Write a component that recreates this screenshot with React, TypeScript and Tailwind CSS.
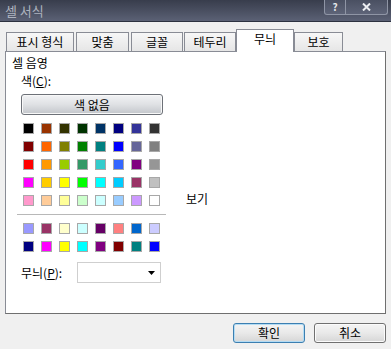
import React from "react";

// Excel "셀 서식" dialog, 무늬 tab — palette is the classic 56-colour one.
const STANDARD_ROWS = [
  ["#000000", "#993300", "#333300", "#003300", "#003366", "#000080", "#333399", "#333333"],
  ["#800000", "#ff6600", "#808000", "#008000", "#008080", "#0000ff", "#666699", "#808080"],
  ["#ff0000", "#ff9900", "#99cc00", "#339966", "#33cccc", "#3366ff", "#800080", "#969696"],
  ["#ff00ff", "#ffcc00", "#ffff00", "#00ff00", "#00ffff", "#00ccff", "#993366", "#c0c0c0"],
  ["#ff99cc", "#ffcc99", "#ffff99", "#ccffcc", "#ccffff", "#99ccff", "#cc99ff", "#ffffff"],
];

const CHART_ROWS = [
  ["#9999ff", "#993366", "#ffffcc", "#ccffff", "#660066", "#ff8080", "#0066cc", "#ccccff"],
  ["#000080", "#ff00ff", "#ffff00", "#00ffff", "#800080", "#800000", "#008080", "#0000ff"],
];

const TABS = [
  { label: "표시 형식", w: "w-[68px]", ml: "ml-0" },
  { label: "맞춤", w: "w-[53px]", ml: "ml-[2px]" },
  { label: "글꼴", w: "w-[52px]", ml: "ml-[2px]" },
  { label: "테두리", w: "w-[52px]", ml: "ml-[1px]" },
];

function Swatches({ rows }: { rows: string[][] }) {
  return (
    <div className="grid grid-cols-[repeat(8,11px)] gap-x-[7px] gap-y-[7px] pl-[17px]">
      {rows.flat().map((c, i) => (
        <div
          key={i}
          className="h-[11px] w-[11px] border border-[#a8a8a8]"
          style={{ backgroundColor: c }}
        />
      ))}
    </div>
  );
}

function Tab({ label, w, ml }: { label: string; w: string; ml: string }) {
  return (
    <div
      className={`${w} ${ml} flex h-[19px] items-center justify-center border border-b-0 border-[#898c95] bg-gradient-to-b from-[#f7f7f7] to-[#e6e6e6] text-[12px] leading-none text-black`}
    >
      {label}
    </div>
  );
}

function DialogButton({ label, focused }: { label: string; focused?: boolean }) {
  return (
    <button
      type="button"
      className={`flex h-[20px] w-[72px] items-center justify-center rounded-[3px] border bg-gradient-to-b from-[#f4f4f4] via-[#e9e9e9] to-[#d6d6d6] text-[12px] leading-none text-black ${
        focused
          ? "border-[#3c7fb1] shadow-[inset_0_0_0_1px_#b4dcf4]"
          : "border-[#707070] shadow-[inset_0_0_0_1px_#fbfbfb]"
      }`}
    >
      {label}
    </button>
  );
}

export default function App() {
  return (
    <div
      className="flex h-[349px] w-[391px] flex-col overflow-hidden bg-[#f0f0f0] text-black"
      style={{ fontFamily: '"Noto Sans CJK KR", "Noto Sans", sans-serif' }}
    >
      {/* title bar */}
      <div className="flex h-[22px] shrink-0 items-start justify-between border-b border-[#2c3140] bg-gradient-to-b from-[#383d4c] to-[#5b6175]">
        <span className="pl-[5px] pt-[3px] text-[13px] leading-[15px] text-[#aeb3bf]">셀 서식</span>
        <div className="mr-[3px] flex">
          <div className="flex h-[15px] w-[22px] items-center justify-center rounded-bl-[3px] border border-t-0 border-[#8f95a5] bg-gradient-to-b from-[#4a5062] to-[#5e6478] text-[10px] font-bold leading-[12px] text-[#e4e6ea]">
            ?
          </div>
          <div className="flex h-[15px] w-[42px] items-center justify-center rounded-br-[3px] border border-l-0 border-t-0 border-[#8f95a5] bg-gradient-to-b from-[#4a5062] to-[#5e6478]">
            <svg width="9" height="8" viewBox="0 0 9 8">
              <path d="M1 0.5l7 7M8 0.5l-7 7" stroke="#eceef2" strokeWidth="2" />
            </svg>
          </div>
        </div>
      </div>

      {/* tabs */}
      <div className="mt-[7px] flex h-[22px] shrink-0 items-end pl-[6px]">
        {TABS.map((t) => (
          <Tab key={t.label} {...t} />
        ))}
        <div className="relative z-10 -mb-px flex h-[23px] w-[58px] items-start justify-center border border-b-0 border-[#898c95] bg-white pt-[2px] text-[12px] leading-[14px]">
          무늬
        </div>
        <Tab label="보호" w="w-[49px]" ml="ml-0" />
      </div>

      {/* panel */}
      <div className="mx-[5px] flex h-[263px] w-[381px] shrink-0 border border-[#898c95] border-b-[#6f6f6f] border-r-[#6f6f6f] bg-white">
        <div className="flex w-[170px] flex-col pl-[6px] pt-[4px] text-[12px] leading-[14px]">
          <span>셀 음영</span>
          <span className="mt-[4px] pl-[9px]">
            색(<span className="underline">C</span>):
          </span>
          <div className="ml-[9px] mt-[6px] flex h-[21px] w-[142px] items-center justify-center rounded-[3px] border border-[#6d7178] bg-gradient-to-b from-[#f2f3f5] via-[#dfe1e4] to-[#c3c6cb] shadow-[inset_0_0_0_1px_#f8f8f8]">
            색 없음
          </div>
          <div className="mt-[8px] -ml-[6px]">
            <Swatches rows={STANDARD_ROWS} />
          </div>
          <div className="ml-[5px] mt-[8px] h-[1px] w-[149px] bg-[#b8b8b8]" />
          <div className="mt-[8px] -ml-[6px]">
            <Swatches rows={CHART_ROWS} />
          </div>
          <div className="mt-[10px] flex items-center pl-[9px]">
            <span className="w-[56px]">
              무늬(<span className="underline">P</span>):
            </span>
            <div className="flex h-[21px] w-[84px] items-center justify-end border border-[#cfcfcf] bg-white pr-[5px]">
              <svg width="7" height="4" viewBox="0 0 7 4">
                <path d="M0 0h7L3.5 4z" fill="#000" />
              </svg>
            </div>
          </div>
        </div>
        <div className="pl-[10px] pt-[140px] text-[12px] leading-[14px]">보기</div>
      </div>

      {/* footer buttons */}
      <div className="mt-[9px] flex justify-end gap-[9px] pr-[5px]">
        <DialogButton label="확인" focused />
        <DialogButton label="취소" />
      </div>
    </div>
  );
}
